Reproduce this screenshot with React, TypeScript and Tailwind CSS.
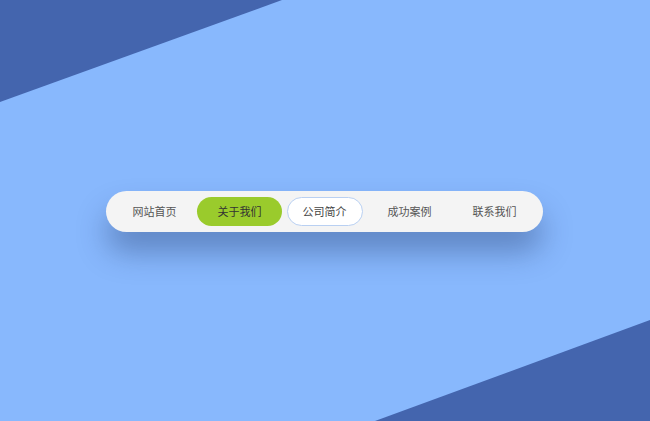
import React from "react";

const items = ["网站首页", "关于我们", "公司简介", "成功案例", "联系我们"];

export default function App() {
  return (
    <div className="relative w-[650px] h-[421px] overflow-hidden bg-[#88b8fd] flex items-center justify-center" style={{ fontFamily: '"Microsoft YaHei", "Noto Sans CJK SC", sans-serif' }}>
      <div className="absolute inset-0 bg-[#4465ae] [clip-path:polygon(0_0,282px_0,0_102px)]" />
      <div className="absolute inset-0 bg-[#4465ae] [clip-path:polygon(650px_320px,650px_421px,375px_421px)]" />
      <nav className="relative mt-[1px] ml-[-1px] w-[437px] h-[41px] rounded-full bg-[#f4f4f4] shadow-[0_20px_30px_rgba(20,40,90,0.35)] flex items-center px-[6px]">
        {items.map((t, i) => (
          <div key={t} className="w-[85px] h-full flex items-center justify-center">
            {i === 1 ? (
              <span className="w-[86px] h-[29px] rounded-full bg-[#9acb2c] text-[#333] text-[11px] flex items-center justify-center">{t}</span>
            ) : i === 2 ? (
              <span className="w-[76px] h-[29px] rounded-full bg-white border border-[#b9d0f2] text-[#444] text-[11px] flex items-center justify-center">{t}</span>
            ) : (
              <span className="text-[11px] text-[#555]">{t}</span>
            )}
          </div>
        ))}
      </nav>
    </div>
  );
}
